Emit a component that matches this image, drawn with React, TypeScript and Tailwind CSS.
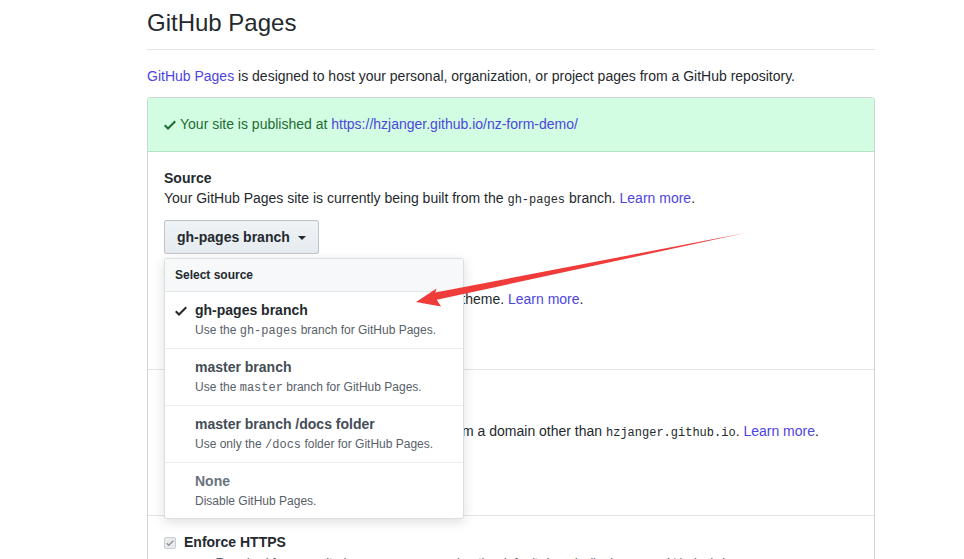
import React from "react";

const link = "text-[#4d45e0]";
const sans = { fontFamily: '"Liberation Sans", Arial, sans-serif' };

function Code({ children }: { children: React.ReactNode }) {
  return <code className="font-['Liberation_Mono',monospace] text-[12px]">{children}</code>;
}

function Check({ className }: { className?: string }) {
  return (
    <svg viewBox="0 0 12 16" width="12" height="16" className={className} fill="currentColor">
      <path fillRule="evenodd" d="M12 5l-8 8-4-4 1.5-1.5L4 10l6.5-6.5L12 5z" />
    </svg>
  );
}

const items = [
  { title: "gh-pages branch", desc: <>Use the <Code>gh-pages</Code> branch for GitHub Pages.</>, selected: true },
  { title: "master branch", desc: <>Use the <Code>master</Code> branch for GitHub Pages.</> },
  { title: "master branch /docs folder", desc: <>Use only the <Code>/docs</Code> folder for GitHub Pages.</> },
  { title: "None", desc: <>Disable GitHub Pages.</> },
];

function SourceMenu() {
  return (
    <div className="absolute left-0 top-[38px] z-10 w-[300px] rounded-[3px] border border-[#1b1f2326] bg-white shadow-[0_3px_12px_rgba(27,31,35,0.15)]">
      <div className="flex h-[33px] items-center border-b border-[#e1e4e8] bg-[#f6f8fa] pl-[10px] text-[12px] font-bold text-[#24292e]">
        Select source
      </div>
      {items.map((it, i) => (
        <div
          key={it.title}
          className={`relative pb-[8px] pl-[30px] pt-[8px] ${i < items.length - 1 ? "border-b border-[#eaecef]" : ""}`}
        >
          {it.selected && <Check className="absolute left-[10px] top-[11px] text-[#24292e]" />}
          <div className={`text-[14px] font-bold leading-[21px] ${it.selected ? "text-[#24292e]" : i === 3 ? "text-[#6a737d]" : "text-[#444d56]"}`}>
            {it.title}
          </div>
          <div className="text-[12px] leading-[18px] text-[#586069]">{it.desc}</div>
        </div>
      ))}
    </div>
  );
}

function Arrow() {
  return (
    <svg className="pointer-events-none absolute left-0 top-0 z-20" width="964" height="559">
      <polygon
        fill="#f03b3b"
        points="745,233 436.8,299.8 441,306.5 416,302 436.5,288.5 435.3,292.6"
      />
    </svg>
  );
}

export default function App() {
  return (
    <div className="relative min-h-[559px] overflow-hidden bg-white text-[14px] text-[#24292e]" style={sans}>
      <Arrow />
      <div className="ml-[147px] w-[728px]">
        <h2 className="border-b border-[#e1e4e8] pb-[11px] pt-[8px] text-[24px] font-normal leading-[30px]">GitHub Pages</h2>
        <p className="mb-[10px] mt-[16px] leading-[21px]">
          <a className={link}>GitHub Pages</a> is designed to host your personal, organization, or project pages from a GitHub repository.
        </p>

        <div className="rounded-[3px] border border-[#d1d5da]">
          <div className="flex h-[54px] items-center gap-[4px] border-b border-[#b0e6c2] bg-[#d3fde2] px-[16px] text-[#1e6b33]">
            <Check className="mt-[1px]" />
            <span>
              Your site is published at <a className={link}>https://hzjanger.github.io/nz-form-demo/</a>
            </span>
          </div>

          <div className="border-b border-[#e1e4e8] px-[16px] pb-[15px] pt-[16px]">
            <h3 className="text-[14px] font-bold leading-[20px]">Source</h3>
            <p className="leading-[21px]">
              Your GitHub Pages site is currently being built from the <Code>gh-pages</Code> branch. <a className={link}>Learn more</a>.
            </p>
            <div className="relative mt-[9px]">
              <button className="flex h-[34px] items-center gap-[8px] rounded-[3px] border border-[#1b1f2333] bg-gradient-to-b from-[#eff3f6] to-[#e6ebf1] px-[12px] text-[14px] font-bold text-[#24292e]">
                gh-pages branch
                <span className="mt-[1px] h-0 w-0 border-x-[4px] border-t-[4px] border-x-transparent border-t-[#24292e]" />
              </button>
              <SourceMenu />
            </div>

            <h3 className="mt-[14px] text-[14px] font-bold leading-[21px]">Theme chooser</h3>
            <p className="leading-[21px]">
              <span className="text-[#c46a12]">Select a theme</span> to publish your site with a Jekyll theme. <a className={link}>Learn more</a>.
            </p>
            <button className="mt-[10px] h-[34px] rounded-[3px] border border-[#1b1f2333] bg-[#eff3f6] px-[12px] font-bold">Change theme</button>
          </div>

          <div className="border-b border-[#e1e4e8] px-[16px] pb-[27px] pt-[16px]">
            <h3 className="text-[14px] font-bold leading-[21px] text-[#c46a12]">Custom domain</h3>
            <p className="mt-[14px] leading-[21px]">
              <span className="text-[#c46a12]">Custom domain</span> allows you to serve your site from a domain other than <Code>hzjanger.github.io</Code>. <a className={link}>Learn more</a>.
            </p>
            <input className="mt-[10px] block h-[34px] w-[280px] rounded-[3px] border border-[#d1d5da] bg-[#fafbfc] px-[8px]" />
          </div>

          <div className="px-[16px] pt-[16px]">
            <div className="flex items-center gap-[8px]">
              <span className="flex h-[12px] w-[12px] items-center justify-center rounded-[2px] border border-[#c8cbcf] bg-[#e9ebee] text-[#8e9399]">
                <Check className="h-[10px] w-[8px]" />
              </span>
              <span className="font-bold leading-[21px]">Enforce HTTPS</span>
            </div>
            <p className="pl-[35px] text-[13px] leading-[20px] text-[#586069]">
              — Required for your site because you are using the default domain (<Code>hzjanger.github.io</Code>)
            </p>
          </div>
        </div>
      </div>
    </div>
  );
}
